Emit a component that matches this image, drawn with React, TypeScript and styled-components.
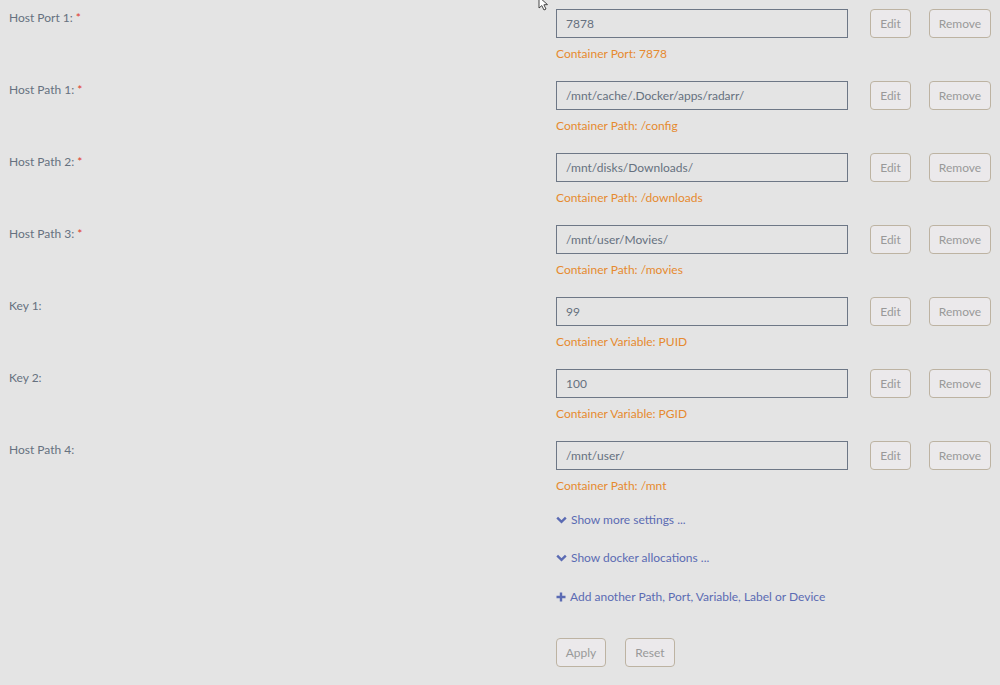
import React from "react";
import styled, { createGlobalStyle } from "styled-components";

const Global = createGlobalStyle`
  html, body { margin: 0; padding: 0; background: #e4e4e4; }
  body { font-family: Lato, "Noto Sans", sans-serif; font-size: 12px; color: #66717f; }
`;

const Page = styled.div`
  position: relative;
  width: 1000px;
  height: 685px;
  overflow: hidden;
  padding: 9px 0 0 0;
  box-sizing: border-box;
`;

const Row = styled.div`
  display: grid;
  grid-template-columns: 556px 1fr;
  height: 72px;
`;

const Label = styled.div`
  padding-left: 9px;
  padding-top: 1px;
  line-height: 16px;
  color: #66717f;
`;

const Star = styled.span`
  color: #e0392b;
  margin-left: 3px;
`;

const Field = styled.div`
  display: flex;
  flex-direction: column;
`;

const Controls = styled.div`
  display: flex;
  align-items: center;
  height: 29px;
`;

const Input = styled.div`
  width: 292px;
  height: 29px;
  box-sizing: border-box;
  border: 1px solid #6d7786;
  padding: 0 9px;
  display: flex;
  align-items: center;
  color: #66717f;
`;

const Button = styled.button<{ $w: number; $ml: number }>`
  width: ${(p) => p.$w}px;
  height: 29px;
  margin-left: ${(p) => p.$ml}px;
  box-sizing: border-box;
  border: 1px solid #bdb3a2;
  border-radius: 4px;
  background: #ebe9eb;
  color: #999999;
  font-family: Lato, "Noto Sans", sans-serif;
  font-size: 12px;
  padding: 0;
  cursor: pointer;
`;

const Note = styled.div`
  margin-top: 9px;
  color: #e68a2f;
  line-height: 14px;
`;

const Footer = styled.div`
  padding-left: 556px;
  display: flex;
  flex-direction: column;
`;

const Link = styled.div<{ $mt: number }>`
  margin-top: ${(p) => p.$mt}px;
  display: flex;
  align-items: center;
  gap: 4px;
  color: #5b6bb3;
  line-height: 14px;
`;

const ButtonRow = styled.div`
  display: flex;
  margin-top: 34px;
`;

const Cursor = styled.svg`
  position: absolute;
  left: 538px;
  top: -3px;
`;

const Chevron = () => (
  <svg width="11" height="8" viewBox="0 0 11 8">
    <path d="M1.2 1.6 L5.5 5.9 L9.8 1.6" fill="none" stroke="#5b6bb3" strokeWidth="2.4" />
  </svg>
);

const Plus = () => (
  <svg width="10" height="10" viewBox="0 0 10 10">
    <path d="M5 0.5 V9.5 M0.5 5 H9.5" stroke="#5b6bb3" strokeWidth="2.4" />
  </svg>
);

const rows = [
  { label: "Host Port 1:", req: true, value: "7878", note: "Container Port: 7878" },
  { label: "Host Path 1:", req: true, value: "/mnt/cache/.Docker/apps/radarr/", note: "Container Path: /config" },
  { label: "Host Path 2:", req: true, value: "/mnt/disks/Downloads/", note: "Container Path: /downloads" },
  { label: "Host Path 3:", req: true, value: "/mnt/user/Movies/", note: "Container Path: /movies" },
  { label: "Key 1:", req: false, value: "99", note: "Container Variable: PUID" },
  { label: "Key 2:", req: false, value: "100", note: "Container Variable: PGID" },
  { label: "Host Path 4:", req: false, value: "/mnt/user/", note: "Container Path: /mnt" },
];

export default function App() {
  return (
    <>
      <Global />
      <Page>
        {rows.map((r) => (
          <Row key={r.label}>
            <Label>
              {r.label}
              {r.req && <Star>*</Star>}
            </Label>
            <Field>
              <Controls>
                <Input>{r.value}</Input>
                <Button $w={41} $ml={22}>Edit</Button>
                <Button $w={62} $ml={18}>Remove</Button>
              </Controls>
              <Note>{r.note}</Note>
            </Field>
          </Row>
        ))}
        <Footer>
          <Link $mt={0}>
            <Chevron />
            Show more settings ...
          </Link>
          <Link $mt={24}>
            <Chevron />
            Show docker allocations ...
          </Link>
          <Link $mt={25}>
            <Plus />
            Add another Path, Port, Variable, Label or Device
          </Link>
          <ButtonRow>
            <Button $w={50} $ml={0}>Apply</Button>
            <Button $w={50} $ml={19}>Reset</Button>
          </ButtonRow>
        </Footer>
        <Cursor width="14" height="16" viewBox="0 0 14 16">
          <path d="M1 0 L1 11 L3.8 8.6 L6 13 L8 12 L5.9 7.8 L9.5 7.6 Z" fill="#fff" stroke="#333" strokeWidth="0.9" />
        </Cursor>
      </Page>
    </>
  );
}
